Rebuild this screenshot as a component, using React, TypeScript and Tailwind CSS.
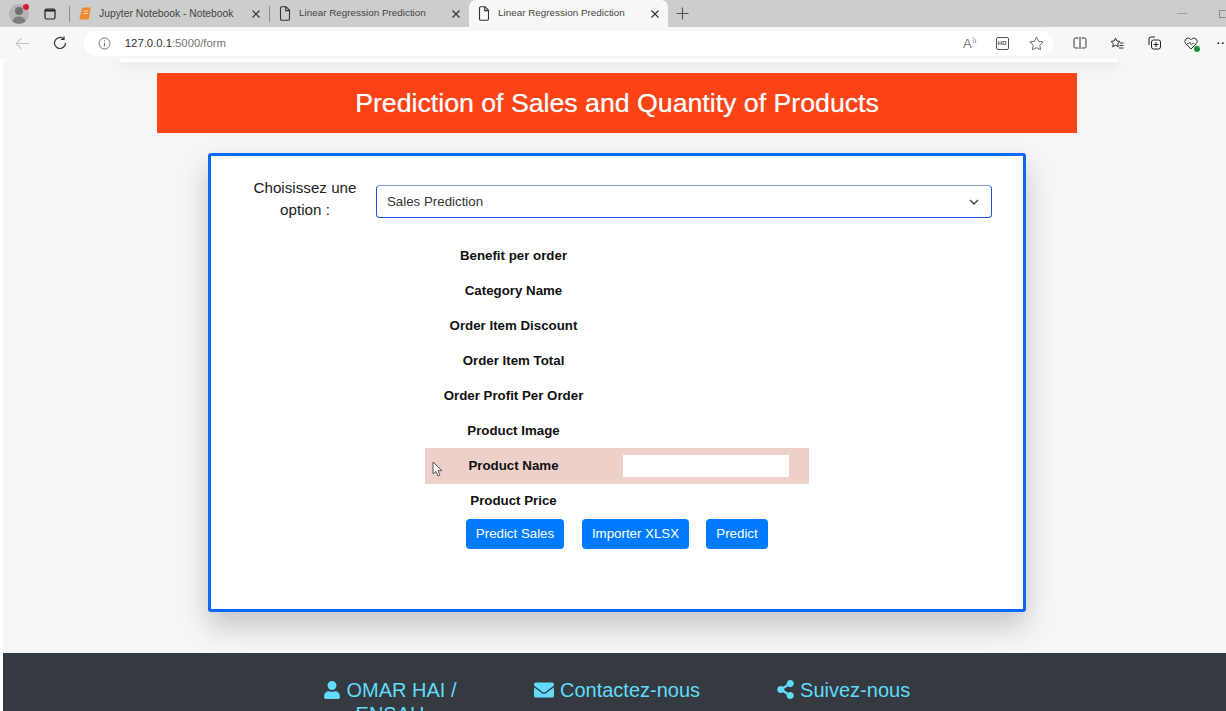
import { FaUser, FaEnvelope, FaShareAlt } from "react-icons/fa";

const F = "font-['Liberation_Sans',Arial,sans-serif]";

function DocIcon() {
  return (
    <svg width="12" height="15" viewBox="0 0 12 15" fill="none" stroke="#333" strokeWidth="1.1" className="shrink-0">
      <path d="M1.500 2a1.200 1.200 0 0 1 1.200-1.200h4.300L10.500 4.300v8.700a1.200 1.200 0 0 1-1.200 1.200H2.700A1.200 1.200 0 0 1 1.500 13z" />
      <path d="M6.700 1v3.600h3.600" />
    </svg>
  );
}

function CloseX() {
  return (
    <svg width="10" height="10" viewBox="0 0 10 10" stroke="#333" strokeWidth="1.1" className="shrink-0">
      <path d="M1.500 1.500l7 7M8.500 1.500l-7 7" />
    </svg>
  );
}

function Tab({ title, active, icon, textClass }: { title: string; active?: boolean; icon: React.ReactNode; textClass: string }) {
  return (
    <div className={`flex items-center w-[199px] h-[27px] pl-[9px] pr-[8px] ${active ? "bg-[#f7f7f7] rounded-t-[7px]" : ""}`}>
      {icon}
      <span className={`ml-[8px] flex-1 text-[#444] whitespace-nowrap ${textClass}`}>{title}</span>
      <CloseX />
    </div>
  );
}

function TopBar() {
  return (
    <div className="h-[27px] bg-[#cdcdcd] flex items-center">
      <div className="w-[37px] flex justify-center relative">
        <div className="w-[20px] h-[20px] rounded-full bg-[#b4b4b4] overflow-hidden flex justify-center ml-[1px]">
          <svg width="16" height="20" viewBox="0 0 16 20">
            <circle cx="8" cy="7" r="4" fill="#6f6f6f" />
            <path d="M1 20c0-5 3-7.500 7-7.500s7 2.500 7 7.500z" fill="#7d7d7d" />
          </svg>
        </div>
        <span className="absolute top-[0px] left-[23px] w-[6px] h-[6px] rounded-full bg-[#d81e2c]" />
      </div>
      <div className="w-[26px] flex justify-center">
        <svg width="12" height="12" viewBox="0 0 12 12" fill="none" stroke="#222" strokeWidth="1.2">
          <rect x="1" y="1" width="10" height="10" rx="1.500" />
          <path d="M1 2.500h10" strokeWidth="2" />
        </svg>
      </div>
      <div className="w-px h-[16px] bg-[#8c8c8c] ml-[6px]" />
      <Tab
        title="Jupyter Notebook - Notebook"
        textClass="text-[10.350px]"
        icon={
          <svg width="12" height="13" viewBox="0 0 12 13" className="shrink-0">
            <path d="M3 1.500a1 1 0 0 1 1-1h6.500a1 1 0 0 1 1 1.200L10 11.500a1 1 0 0 1-1 1H1.500a1 1 0 0 1-1-1.200z" fill="#ef8a33" />
            <path d="M4.500 4h4.500M4.200 6.500h4.500" stroke="#fcd9b0" strokeWidth="1" />
          </svg>
        }
      />
      <div className="w-px h-[16px] bg-[#8c8c8c]" />
      <Tab title="Linear Regression Prediction" textClass="text-[9.900px]" icon={<DocIcon />} />
      <Tab title="Linear Regression Prediction" textClass="text-[9.900px]" active icon={<DocIcon />} />
      <div className="ml-[8px]">
        <svg width="13" height="13" viewBox="0 0 13 13" stroke="#555" strokeWidth="1.100">
          <path d="M6.500 0.500v12M0.500 6.500h12" />
        </svg>
      </div>
      <div className="flex-1" />
      <div className="w-[10px] h-px bg-[#9e9e9e] mr-[32px]" />
      <div className="w-[7px] h-[8px] border border-[#8c8c8c] rounded-[1px] border-r-0" />
    </div>
  );
}

function Toolbar() {
  return (
    <div className="h-[32px] bg-[#f7f7f7] flex items-center">
      <div className="w-[46px] flex justify-center">
        <svg width="15" height="13" viewBox="0 0 15 13" fill="none" stroke="#c4c4c4" strokeWidth="1.100">
          <path d="M14 6.500H1.500M6.500 1.200 1.200 6.500l5.300 5.300" />
        </svg>
      </div>
      <div className="w-[28px] flex justify-center">
        <svg width="14" height="14" viewBox="0 0 14 14" fill="none" stroke="#333" strokeWidth="1.200">
          <path d="M12.500 7a5.500 5.500 0 1 1-1.700-4" />
          <path d="M11 0.500v3H8" />
        </svg>
      </div>
      <div className="ml-[10px] w-[971px] h-[25px] bg-white rounded-[13px] flex items-center pl-[14px]">
        <svg width="13" height="13" viewBox="0 0 13 13" fill="none" stroke="#666" strokeWidth="0.900">
          <circle cx="6.500" cy="6.500" r="5.500" />
          <path d="M6.500 5.700v3.800M6.500 3.300v1.200" />
        </svg>
        <span className="ml-[14px] text-[11.300px] text-[#333] whitespace-nowrap">
          127.0.0.1<span className="text-[#777]">:5000/form</span>
        </span>
        <div className="flex-1" />
        <div className="flex items-start mr-[18px]">
          <span className="text-[13px] text-[#777] leading-none">A</span>
          <svg width="6" height="9" viewBox="0 0 6 9" fill="none" stroke="#888" strokeWidth="0.800">
            <path d="M0.500 0.500Q4 2 4 6M0.500 3Q2 3.800 2 6" />
          </svg>
        </div>
        <span className="w-[13px] h-[13px] border border-[#555] rounded-[2px] text-[6px] leading-[11px] font-bold text-center text-[#555] mr-[20px]">
          HD
        </span>
        <svg width="15" height="15" viewBox="0 0 14 14" fill="none" stroke="#666" strokeWidth="0.900" className="mr-[9px]">
          <path d="M7 1l1.900 3.900 4.300.6-3.100 3 .7 4.300L7 10.800l-3.800 2 .7-4.300-3.100-3 4.300-.6z" />
        </svg>
      </div>
      <div className="ml-[20px] flex items-center gap-[23px]">
        <svg width="14" height="12" viewBox="0 0 14 12" fill="none" stroke="#333" strokeWidth="1">
          <path d="M5.500 1H2.500A1.500 1.500 0 0 0 1 2.500v7A1.500 1.500 0 0 0 2.500 11h3M8.500 1h3A1.500 1.500 0 0 1 13 2.500v7a1.500 1.500 0 0 1-1.500 1.500h-3" />
          <path d="M7 0v12" />
        </svg>
        <svg width="14" height="13" viewBox="0 0 14 13" fill="none" stroke="#333" strokeWidth="1">
          <path d="M5.500 1l1.400 3 3.100.4-2.300 2.200.6 3.200-2.800-1.600-2.800 1.600.6-3.200L1 4.400 4.100 4z" />
          <path d="M10 6h3.500M9.500 8.500h4M9 11h4.500" />
        </svg>
        <svg width="14" height="14" viewBox="0 0 14 14" fill="none" stroke="#222" strokeWidth="1">
          <path d="M2 9V3a2 2 0 0 1 2-2h4" />
          <rect x="4.500" y="4" width="9" height="9" rx="2" />
          <path d="M9 6v5M6.500 8.500h5" />
        </svg>
        <div className="relative">
          <svg width="14" height="13" viewBox="0 0 14 13" fill="none" stroke="#333" strokeWidth="1">
            <path d="M7 12 1.800 6.800a3.300 3.300 0 0 1 4.700-4.700l.5.500.5-.5a3.300 3.300 0 0 1 4.700 4.700z" />
            <path d="M3 6.500h2l1-1.500 1.500 3 1-1.500h2" strokeWidth="0.700" />
          </svg>
          <span className="absolute right-[-2px] bottom-[-2px] w-[6px] h-[6px] rounded-full bg-[#1d8f3c]" />
        </div>
        <span className="text-[11px] text-[#222] leading-none tracking-[1px] font-bold -ml-[4px]">··</span>
      </div>
    </div>
  );
}

const labels = [
  "Benefit per order",
  "Category Name",
  "Order Item Discount",
  "Order Item Total",
  "Order Profit Per Order",
  "Product Image",
  "Product Name",
  "Product Price",
];

function Row({ label }: { label: string }) {
  const hi = label === "Product Name";
  return (
    <div className={`w-[384px] flex items-center relative ${hi ? "bg-[#eed0cb] h-[36px] pb-[1px] -mb-[1px]" : "h-[35px]"}`}>
      <label className="w-[177px] text-center text-[13.300px] font-bold text-[#111]">{label}</label>
      {hi && <div className="ml-[21px] w-[166px] h-[22px] bg-white" />}
      {hi && (
        <svg width="14" height="18" viewBox="0 0 14 18" className="absolute left-[6px] top-[13px]">
          <path d="M2 1v12l3-2.500 2 4.500 2-1-2-4.300h4z" fill="#fff" stroke="#555" strokeWidth="1" />
        </svg>
      )}
    </div>
  );
}

function Btn({ children, className }: { children: React.ReactNode; className: string }) {
  return (
    <button className={`h-[30px] bg-[#007bff] text-white text-[13.300px] rounded-[4px] ${className}`}>{children}</button>
  );
}

function Card() {
  return (
    <div className="mt-[20px] w-[818px] h-[459px] bg-white border-[3px] border-[#0d67f5] rounded-[3px] shadow-[0_14px_28px_rgba(0,0,0,0.2)] ml-[205px] shrink-0">
      <div className="flex items-start pt-[21px]">
        <div className="w-[112px] ml-[38px] text-center text-[15.200px] leading-[22px] text-[#222]">Choisissez une option :</div>
        <div className="ml-[15px] mt-[8px] w-[616px] h-[33px] rounded-[4px] border border-[#1a56db] border-t-[#7f9fe0] flex items-center px-[10px]">
          <span className="text-[13.300px] text-[#333] flex-1 pt-[1px]">Sales Prediction</span>
          <svg width="10" height="6" viewBox="0 0 10 6" fill="none" stroke="#444" strokeWidth="1.400" className="mr-[2px]">
            <path d="M1 1l4 4 4-4" />
          </svg>
        </div>
      </div>
      <div className="ml-[214px] mt-[17px] flex flex-col">
        {labels.map((l) => (
          <Row key={l} label={l} />
        ))}
      </div>
      <div className="flex ml-[255px] mt-[1px]">
        <Btn className="w-[98px]">Predict Sales</Btn>
        <Btn className="w-[107px] ml-[18px]">Importer XLSX</Btn>
        <Btn className="w-[62px] ml-[17px]">Predict</Btn>
      </div>
    </div>
  );
}

function Footer() {
  return (
    <div className="ml-[3px] mt-[41px] h-[60px] bg-[#343a40] flex overflow-hidden text-[20px] leading-[24px] text-[#61dafb] shrink-0">
      <div className="ml-[311px] mt-[25px] w-[152px] text-center">
        <FaUser size={18} className="inline-block align-[-2px] mr-[5px]" />
        OMAR HAI / ENSAH
      </div>
      <div className="ml-[68px] mt-[25px] flex items-start whitespace-nowrap">
        <FaEnvelope size={20} className="mt-[2px] mr-[6px]" />
        Contactez-nous
      </div>
      <div className="ml-[76px] mt-[25px] flex items-start whitespace-nowrap">
        <FaShareAlt size={19} className="mt-[2px] mr-[5px]" />
        Suivez-nous
      </div>
    </div>
  );
}

export default function App() {
  return (
    <div className={`${F} w-[1226px] h-[711px] overflow-hidden bg-white flex flex-col`}>
      <TopBar />
      <Toolbar />
      <div className="flex-1 flex flex-col bg-[#f6f6f8] ml-[3px] rounded-tl-[6px] overflow-hidden relative">
        <div className="absolute left-[116px] top-0 right-[108px] h-[3px] bg-white shadow-[0_3px_10px_rgba(0,0,0,0.12)] rounded-b-[4px]" />
        <div className="ml-[154px] mt-[14px] w-[920px] h-[60px] bg-[#fc4316] flex items-center justify-center text-white text-[26.700px] [text-shadow:0_0_1px_rgba(255,255,255,0.6)] shrink-0">
          Prediction of Sales and Quantity of Products
        </div>
        <Card />
        <div className="-ml-[3px]">
          <Footer />
        </div>
      </div>
    </div>
  );
}
